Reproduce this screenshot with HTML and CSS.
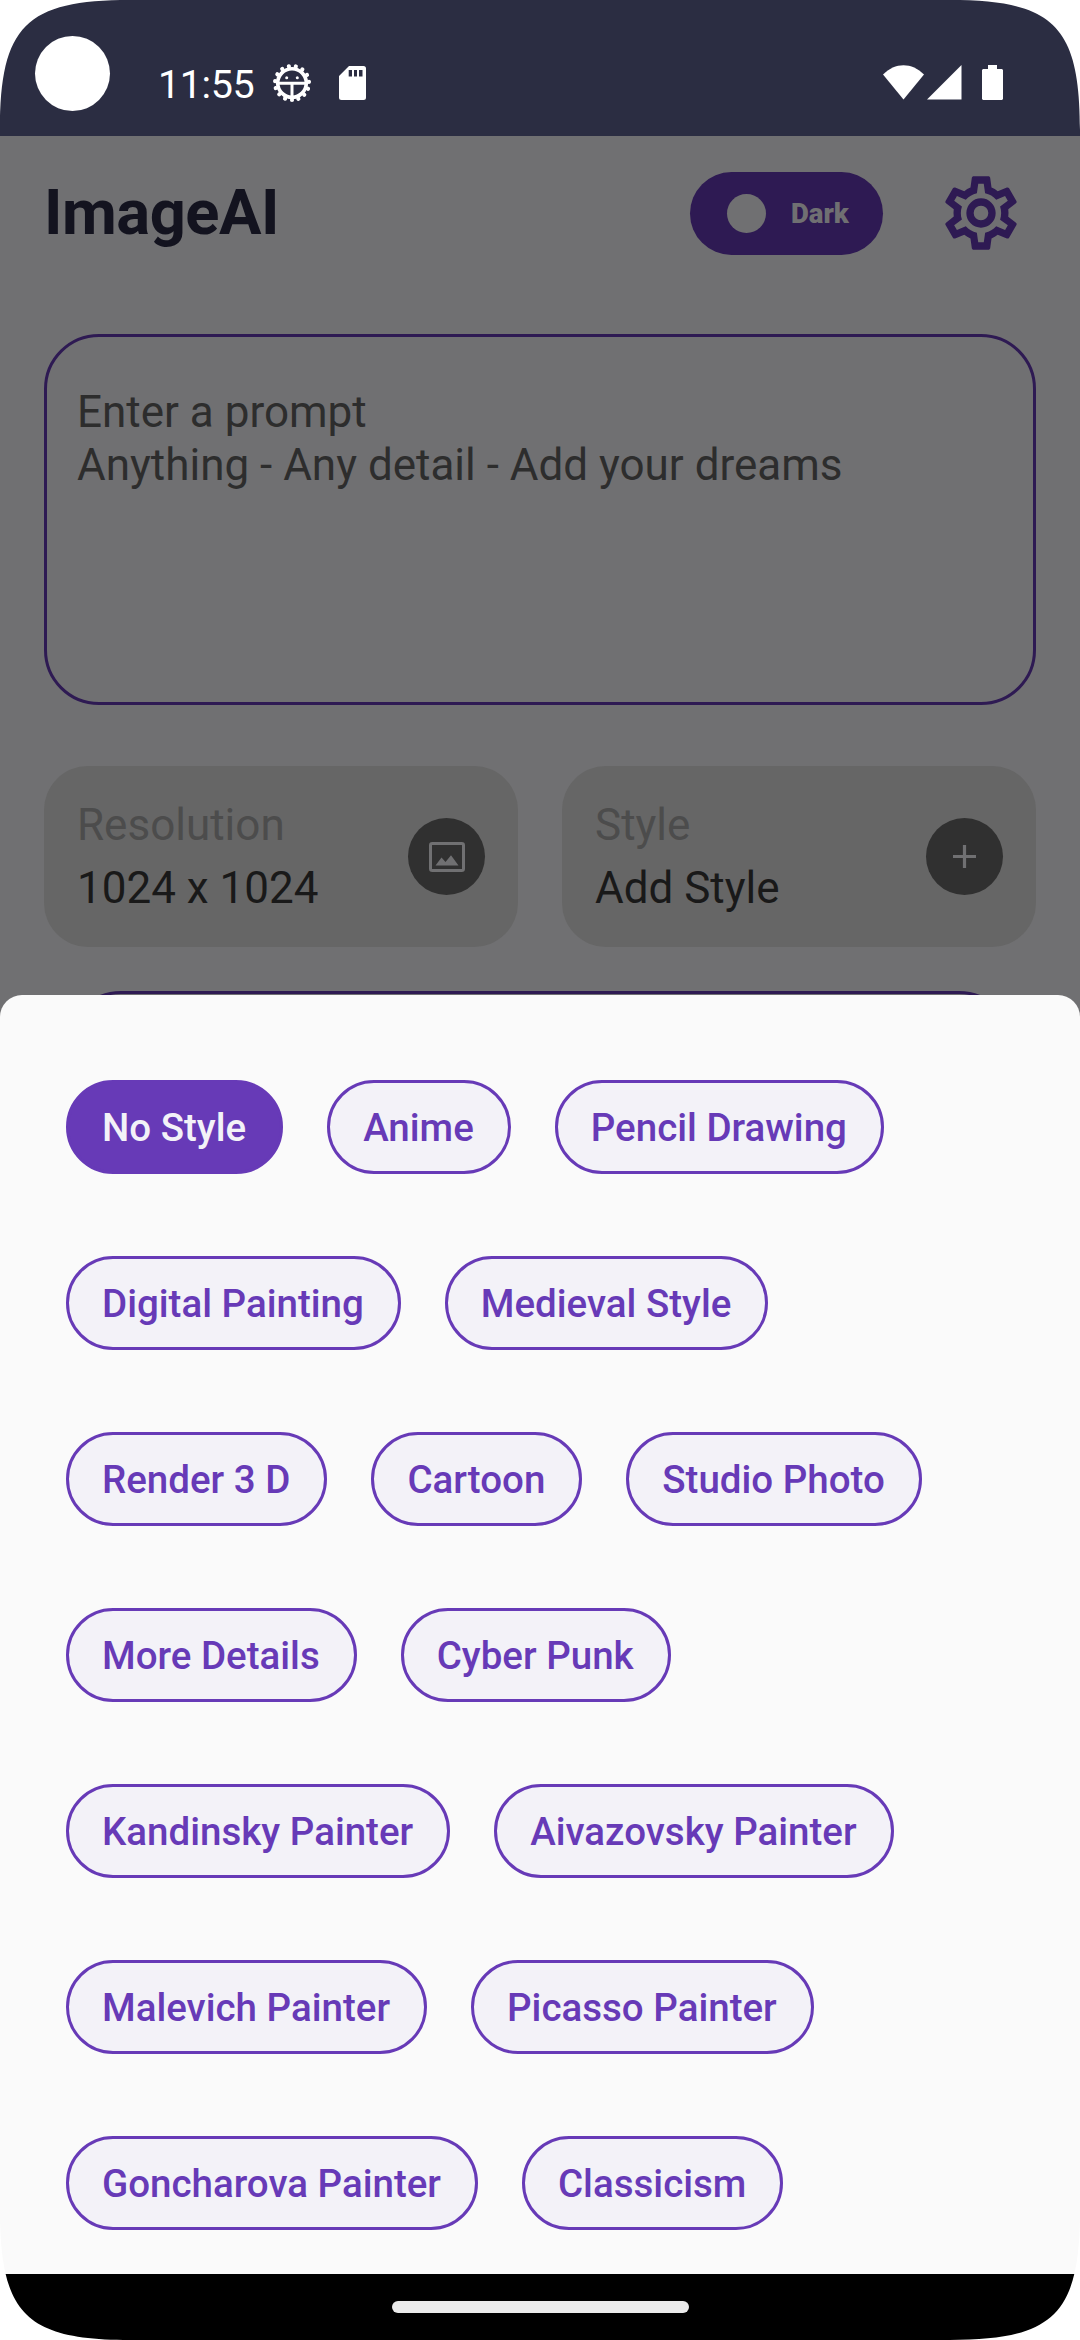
FILE: index.html
```html
<!DOCTYPE html>
<html lang="en">
<head>
<meta charset="utf-8">
<title>ImageAI</title>
<link rel="stylesheet" href="styles.css">
</head>
<body>
<div class="phone">
  <div class="statusbar">
    <div class="status-left">
      <span class="camera"></span>
      <span class="clock">11:55</span>
      <svg class="bug" viewBox="0 0 40 40" fill="none" stroke="#fff">
        <circle cx="20" cy="20" r="17" stroke-width="4.2" stroke-linecap="round" stroke-dasharray="0.01 7.111" transform="rotate(90 20 20)"/>
        <circle cx="20" cy="20" r="14.300" stroke-width="3.600"/>
        <path d="M7 20.200H33M20 20V34" stroke-width="3"/>
        <g fill="#fff" stroke="none"><circle cx="14.700" cy="14.700" r="1.500"/><circle cx="25.300" cy="14.700" r="1.500"/></g>
      </svg>
      <svg class="sdcard" viewBox="0 0 27 34"><path fill="#fff" fill-rule="evenodd" d="M10 0H24.500A2.500 2.500 0 0 1 27 2.500V31.500A2.500 2.500 0 0 1 24.500 34H2.500A2.500 2.500 0 0 1 0 31.500V10ZM9.700 4V10.500H13V4ZM15 4V10.500H18V4ZM20 4V10.500H23.500V4Z"/></svg>
    </div>
    <div class="status-right">
      <svg class="wifi" viewBox="0 0 41 35" fill="#fff"><path d="M0 9.500C12 -3 29 -3 41 9.500L20.500 34.500Z"/></svg>
      <svg class="signal" viewBox="0 0 35 35" fill="#fff"><path d="M34.500 0V34.500H0Z"/></svg>
      <svg class="battery" viewBox="0 0 21 35" fill="#fff"><path d="M6 0H15V4H20L21 5V34L20 35H1L0 34V5L1 4H6Z"/></svg>
    </div>
  </div>

  <main class="app">
    <header class="header">
      <h1 class="title">ImageAI</h1>
      <div class="toggle"><span class="knob"></span><span class="toggle-label">Dark</span></div>
      <svg class="gear" viewBox="0 0 24 24"><path fill="currentColor" d="M12,8A4,4 0 0,1 16,12A4,4 0 0,1 12,16A4,4 0 0,1 8,12A4,4 0 0,1 12,8M12,10A2,2 0 0,0 10,12A2,2 0 0,0 12,14A2,2 0 0,0 14,12A2,2 0 0,0 12,10M10,22C9.75,22 9.54,21.82 9.5,21.58L9.13,18.93C8.5,18.68 7.96,18.34 7.44,17.94L4.95,18.95C4.73,19.03 4.46,18.95 4.34,18.73L2.34,15.27C2.21,15.05 2.27,14.78 2.46,14.63L4.57,12.97L4.5,12L4.57,11L2.46,9.37C2.27,9.22 2.21,8.95 2.34,8.73L4.34,5.27C4.46,5.05 4.73,4.96 4.95,5.05L7.44,6.05C7.96,5.66 8.5,5.32 9.13,5.07L9.5,2.42C9.54,2.18 9.75,2 10,2H14C14.25,2 14.46,2.18 14.5,2.42L14.87,5.07C15.5,5.32 16.04,5.66 16.56,6.05L19.05,5.05C19.27,4.96 19.54,5.05 19.66,5.27L21.66,8.73C21.79,8.95 21.73,9.22 21.54,9.37L19.43,11L19.5,12L19.43,13L21.54,14.63C21.73,14.78 21.79,15.05 21.66,15.27L19.66,18.73C19.54,18.95 19.27,19.04 19.05,18.95L16.56,17.95C16.04,18.34 15.5,18.68 14.87,18.93L14.5,21.58C14.46,21.82 14.25,22 14,22H10M11.25,4L10.88,6.61C9.68,6.86 8.62,7.5 7.85,8.39L5.44,7.35L4.69,8.65L6.8,10.2C6.4,11.37 6.4,12.64 6.8,13.8L4.68,15.36L5.43,16.66L7.86,15.62C8.63,16.5 9.68,17.14 10.87,17.38L11.24,20H12.76L13.13,17.39C14.32,17.14 15.37,16.5 16.14,15.62L18.57,16.66L19.32,15.36L17.2,13.81C17.6,12.64 17.6,11.37 17.2,10.2L19.31,8.65L18.56,7.35L16.15,8.39C15.38,7.5 14.32,6.86 13.12,6.62L12.75,4H11.25Z"/></svg>
    </header>
    <div class="prompt">Enter a prompt<br>Anything - Any detail - Add your dreams</div>
    <div class="cards">
      <div class="card">
        <div class="card-text"><span class="card-label">Resolution</span><span class="card-value">1024 x 1024</span></div>
        <span class="card-icon"><svg width="36" height="30" viewBox="0 0 36 30"><rect x="1.500" y="1.500" width="33" height="27" rx="1.800" fill="none" stroke="#707072" stroke-width="3"/><path fill="#707072" d="M6.500 23.500L12.500 15.500L16.500 20L22 13.200L29.500 23.500Z"/></svg></span>
      </div>
      <div class="card">
        <div class="card-text"><span class="card-label">Style</span><span class="card-value">Add Style</span></div>
        <span class="card-icon"><svg width="23" height="23" viewBox="0 0 23 23"><path d="M11.500 0V23M0 11.500H23" stroke="#707072" stroke-width="3.200"/></svg></span>
      </div>
    </div>
    <div class="generate"></div>
  </main>

  <section class="sheet">
    <div class="row"><span class="chip selected">No Style</span><span class="chip">Anime</span><span class="chip">Pencil Drawing</span></div>
    <div class="row"><span class="chip">Digital Painting</span><span class="chip">Medieval Style</span></div>
    <div class="row"><span class="chip">Render 3 D</span><span class="chip">Cartoon</span><span class="chip">Studio Photo</span></div>
    <div class="row"><span class="chip">More Details</span><span class="chip">Cyber Punk</span></div>
    <div class="row"><span class="chip">Kandinsky Painter</span><span class="chip">Aivazovsky Painter</span></div>
    <div class="row"><span class="chip">Malevich Painter</span><span class="chip">Picasso Painter</span></div>
    <div class="row"><span class="chip">Goncharova Painter</span><span class="chip">Classicism</span></div>
  </section>

  <nav class="navbar"><span class="handle"></span></nav>

  <svg class="corner tl" viewBox="0 0 130 130"><path d="M0 0H130C26 0 0 26 0 130Z"/></svg>
  <svg class="corner tr" viewBox="0 0 130 130"><path d="M0 0H130C26 0 0 26 0 130Z"/></svg>
  <svg class="corner bl" viewBox="0 0 130 130"><path d="M0 0H130C26 0 0 26 0 130Z"/></svg>
  <svg class="corner br" viewBox="0 0 130 130"><path d="M0 0H130C26 0 0 26 0 130Z"/></svg>
</div>
</body>
</html>
```
FILE: styles.css
```css
* { box-sizing: border-box; }
body { margin: 0; background: #fff; font-family: Roboto, sans-serif; }
svg { display: block; }

.phone {
  position: relative;
  width: 1080px;
  height: 2340px;
  overflow: hidden;
  display: flex;
  flex-direction: column;
  background: #707072;
}

.statusbar {
  flex: none;
  height: 136px;
  background: #2b2d42;
  display: flex;
  justify-content: space-between;
}
.status-left, .status-right { display: flex; align-items: flex-start; }
.status-left { padding-left: 35px; }
.status-right { padding: 65px 77px 0 0; }
.camera { width: 75px; height: 75px; margin-top: 36px; border-radius: 50%; background: #fff; }
.clock { margin: 62px 0 0 48px; width: 96px; font-size: 39.500px; line-height: 46px; letter-spacing: -0.400px; color: #fff; }
.bug { width: 40px; height: 40px; margin: 63px 0 0 17.500px; }
.sdcard { width: 27px; height: 34px; margin: 66px 0 0 27.500px; }
.wifi { width: 41px; height: 35px; }
.signal { width: 35px; height: 35px; margin-left: 3px; }
.battery { width: 21px; height: 35px; margin-left: 20px; }

.app { flex: none; height: 859px; padding: 0 44px; display: flex; flex-direction: column; }
.header { height: 154px; display: flex; align-items: center; }
.title { margin: 0 0 2px; font-size: 63.250px; line-height: 74px; letter-spacing: -0.500px; font-weight: 700; color: #13131f; }
.toggle {
  width: 193px;
  height: 83px;
  margin-left: auto;
  border-radius: 42px;
  background: #2e1a53;
  color: #707072;
  display: flex;
  align-items: center;
  padding-left: 37px;
}
.knob { width: 39px; height: 39px; border-radius: 50%; background: #707072; }
.toggle-label { margin-left: 25px; font-size: 27.500px; font-weight: 900; }
.gear { width: 88px; height: 88px; margin: 0 11px 0 54px; color: #2e1a53; }

.prompt {
  margin-top: 44px;
  height: 371px;
  border: 3px solid #2e1a53;
  border-radius: 55px;
  padding: 49px 30px;
  font-size: 44px;
  line-height: 53px;
  color: #2d2d2d;
}

.cards { margin-top: 61px; display: flex; gap: 44px; }
.card {
  flex: 1;
  height: 181px;
  border-radius: 44px;
  background: #666;
  padding: 0 33px;
  display: flex;
  align-items: center;
  justify-content: space-between;
}
.card-text { display: flex; flex-direction: column; gap: 11px; font-size: 44px; line-height: 52px; }
.card-label { color: #4c4c4c; }
.card-value { color: #191919; }
.card-icon {
  width: 77px;
  height: 77px;
  border-radius: 50%;
  background: #303030;
  display: flex;
  align-items: center;
  justify-content: center;
}
.generate { margin: 44px 22px 0; height: 4px; overflow: hidden; }
.generate::before {
  content: "";
  display: block;
  height: 121px;
  border: 3px solid #2e1a53;
  border-radius: 55px;
}

.sheet {
  flex: none;
  height: 1279px;
  border-radius: 22px 22px 0 0;
  background: #fafafa;
  padding: 85px 66px 0;
  display: flex;
  flex-direction: column;
  gap: 82px;
}
.row { display: flex; gap: 44px; }
.chip {
  height: 94px;
  padding: 0 34px 0 33px;
  border: 3px solid #673ab7;
  border-radius: 47px;
  background: #f3f2f8;
  color: #673ab7;
  font-size: 38.500px;
  font-weight: 500;
  line-height: 90px;
  white-space: nowrap;
}
.chip.selected { background: #673ab7; color: #f3f2f8; }

.navbar { flex: none; height: 66px; background: #000; display: flex; justify-content: center; padding-top: 27px; }
.handle { width: 297px; height: 12px; border-radius: 6px; background: #ebebeb; }

.corner { position: absolute; width: 130px; height: 130px; fill: #fff; }
.tl { top: 0; left: 0; }
.tr { top: 0; right: 0; transform: scaleX(-1); }
.bl { bottom: 0; left: 0; transform: scaleY(-1); }
.br { bottom: 0; right: 0; transform: scale(-1); }
```
